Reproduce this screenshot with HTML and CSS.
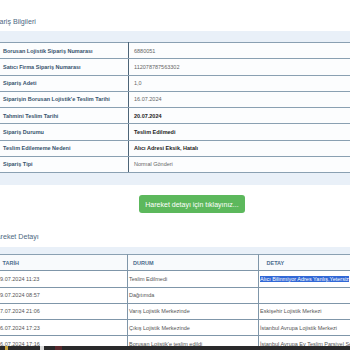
FILE: index.html
```html
<!DOCTYPE html>
<html lang="tr">
<head>
<meta charset="utf-8">
<link rel="stylesheet" href="styles.css">
</head>
<body>
<div class="page">
  <h2 class="title title-siparis">Sipariş Bilgileri</h2>
  <div class="band band-top">
    <table class="info">
      <tr><td class="lbl">Borusan Lojistik Sipariş Numarası</td><td class="val">6880051</td></tr>
      <tr><td class="lbl">Satıcı Firma Sipariş Numarası</td><td class="val">112078787563302</td></tr>
      <tr><td class="lbl">Sipariş Adeti</td><td class="val">1,0</td></tr>
      <tr><td class="lbl">Siparişin Borusan Lojistik'e Teslim Tarihi</td><td class="val">16.07.2024</td></tr>
      <tr><td class="lbl">Tahmini Teslim Tarihi</td><td class="val strong">20.07.2024</td></tr>
      <tr><td class="lbl">Sipariş Durumu</td><td class="val strong">Teslim Edilmedi</td></tr>
      <tr><td class="lbl">Teslim Edilememe Nedeni</td><td class="val strong">Alıcı Adresi Eksik, Hatalı</td></tr>
      <tr><td class="lbl">Sipariş Tipi</td><td class="val">Normal Gönderi</td></tr>
    </table>
  </div>
  <div class="btn-row"><button class="btn">Hareket detayı için tıklayınız...</button></div>
  <h2 class="title title-hareket">Hareket Detayı</h2>
  <div class="band band-bottom">
    <table class="moves">
      <colgroup><col class="w1"><col class="w2"><col class="w3"></colgroup>
      <tr class="head"><th class="c1">TARİH</th><th class="c2">DURUM</th><th class="c3">DETAY</th></tr>
      <tr><td class="c1">19.07.2024 11:23</td><td class="c2">Teslim Edilmedi</td><td class="c3"><span class="sel">Alıcı Bilinmiyor Adres Yanlış,Yetersiz</span></td></tr>
      <tr><td class="c1">19.07.2024 08:57</td><td class="c2">Dağıtımda</td><td class="c3"></td></tr>
      <tr><td class="c1">17.07.2024 21:06</td><td class="c2">Varış Lojistik Merkezinde</td><td class="c3">Eskişehir Lojistik Merkezi</td></tr>
      <tr><td class="c1">16.07.2024 17:23</td><td class="c2">Çıkış Lojistik Merkezinde</td><td class="c3">İstanbul Avrupa Lojistik Merkezi</td></tr>
      <tr><td class="c1">16.07.2024 17:16</td><td class="c2">Borusan Lojistik'e teslim edildi</td><td class="c3">İstanbul Avrupa Ev Teslim Parsiyel Sevk</td></tr>
      <tr><td class="c1">16.07.2024 10:02</td><td class="c2">Sipariş Oluşturuldu</td><td class="c3"></td></tr>
    </table>
  </div>
</div>
<div class="taskbar">
  <span class="tb-icon tb-yellow"></span>
  <span class="tb-icon tb-white"></span>
  <span class="tb-icon tb-red"></span>
</div>
</body>
</html>
```
FILE: styles.css
```css
html, body {
  margin: 0;
  padding: 0;
  background: #ffffff;
  overflow: hidden;
}
body {
  font-family: "Liberation Sans", Arial, sans-serif;
  width: 350px;
  height: 350px;
}
.page {
  padding-top: 18px;
}
.title {
  margin: 0;
  font-size: 7.1px;
  line-height: 8px;
  font-weight: normal;
  color: #4d6882;
  white-space: nowrap;
}
.title-siparis {
  margin-left: -10.7px;
}
.title-hareket {
  margin-left: -8.5px;
  margin-top: 20px;
}
.band {
  background: #e9f0f8;
  overflow: hidden;
  width: 350px;
}
.band-top {
  margin-top: 5px;
  padding: 11px 0 12px 0;
}
.band-bottom {
  margin-top: 6px;
  padding-top: 7px;
}
table {
  border-collapse: collapse;
  white-space: nowrap;
}
.info {
  width: 380px;
  background: #fcfdfe;
}
.info tr {
  height: 16.25px;
}
.info td {
  border-top: 1.5px solid #8aa0b2;
  border-bottom: 1.5px solid #8aa0b2;
  font-size: 5.5px;
  padding: 0 3px;
  vertical-align: middle;
}
.info td.lbl {
  width: 122px;
  border-right: 1px solid #4c6478;
  font-weight: bold;
  color: #36526c;
}
.info td.val {
  color: #666;
  padding-left: 5px;
}
.info td.val.strong {
  font-weight: bold;
  color: #222;
}
.btn-row {
  padding: 10px 0 0 139px;
}
.btn {
  display: block;
  width: 106px;
  height: 18px;
  border: none;
  border-radius: 3px;
  background: #5cb85c;
  color: #ffffff;
  font-family: "Liberation Sans", Arial, sans-serif;
  font-size: 7px;
  padding: 0;
  text-align: center;
}
.moves {
  margin-left: -5px;
  width: 413px;
  table-layout: fixed;
  background: #ffffff;
}
.moves col.w1 { width: 132px; }
.moves col.w2 { width: 131px; }
.moves col.w3 { width: 150px; }
.moves tr {
  height: 16.25px;
}
.moves th, .moves td {
  border: 1px solid #7f96a9;
  font-size: 5.5px;
  text-align: left;
  vertical-align: middle;
  padding: 0 0 0 1px;
  color: #555;
  font-weight: normal;
  overflow: hidden;
}
.moves th {
  font-weight: bold;
  color: #4b6c8c;
  background: #f8fafc;
  border-top: 1.5px solid #8aa0b2;
}
.moves th.c1 { padding-left: 6.5px; }
.moves th.c2 { padding-left: 5px; }
.moves th.c3 { padding-left: 7.5px; }
.sel {
  background: #3168d6;
  color: #ffffff;
}
.taskbar {
  position: fixed;
  left: 0;
  bottom: 0;
  width: 350px;
  height: 4px;
  background: #2a2a2b;
  display: flex;
  align-items: flex-start;
}
.tb-icon {
  display: block;
  height: 4px;
}
.tb-yellow {
  width: 3px;
  margin-left: 5px;
  background: #c9a43a;
}
.tb-white {
  width: 4px;
  margin-left: 32px;
  background: #d8d8d8;
}
.tb-red {
  width: 7px;
  margin-left: 11px;
  background: #5a2a2e;
}
```
